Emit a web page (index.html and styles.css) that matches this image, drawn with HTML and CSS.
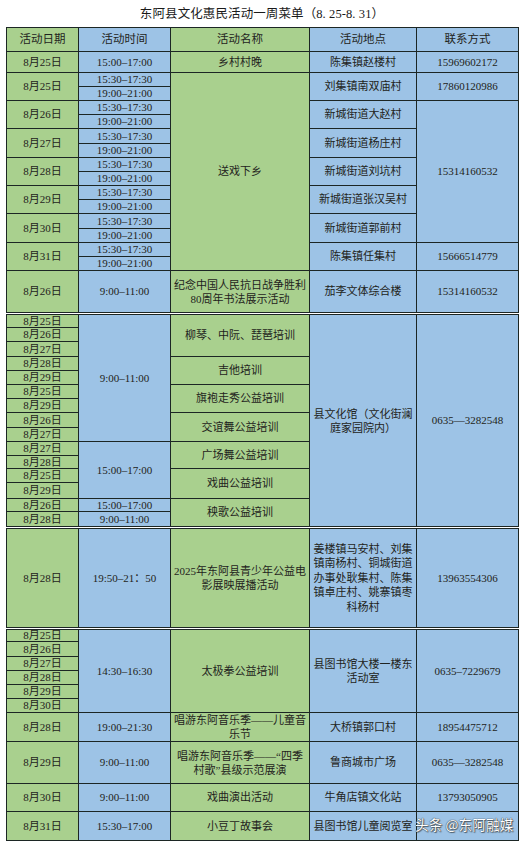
FILE: index.html
```html
<!DOCTYPE html>
<html lang="zh-CN">
<head>
<meta charset="utf-8">
<title>东阿县文化惠民活动一周菜单</title>
<link rel="stylesheet" href="styles.css">
</head>
<body>
<div class="page">
  <div class="title">东阿县文化惠民活动一周菜单（8. 25-8. 31）</div>
  <table class="menu">
    <colgroup>
      <col class="c-date">
      <col class="c-time">
      <col class="c-name">
      <col class="c-place">
      <col class="c-contact">
    </colgroup>
    <tr class="h24 head">
      <td>活动日期</td><td>活动时间</td><td>活动名称</td><td>活动地点</td><td>联系方式</td>
    </tr>
    <tr class="h21">
      <td>8月25日</td><td>15:00–17:00</td><td>乡村村晚</td><td>陈集镇赵楼村</td><td>15969602172</td>
    </tr>
    <tr class="h14">
      <td rowspan="2">8月25日</td><td>15:30–17:30</td><td rowspan="14">送戏下乡</td><td rowspan="2">刘集镇南双庙村</td><td rowspan="2">17860120986</td>
    </tr>
    <tr class="h14"><td>19:00–21:00</td></tr>
    <tr class="h14">
      <td rowspan="2">8月26日</td><td>15:30–17:30</td><td rowspan="2">新城街道大赵村</td><td rowspan="10">15314160532</td>
    </tr>
    <tr class="h14"><td>19:00–21:00</td></tr>
    <tr class="h15">
      <td rowspan="2">8月27日</td><td>15:30–17:30</td><td rowspan="2">新城街道杨庄村</td>
    </tr>
    <tr class="h14"><td>19:00–21:00</td></tr>
    <tr class="h14">
      <td rowspan="2">8月28日</td><td>15:30–17:30</td><td rowspan="2">新城街道刘坑村</td>
    </tr>
    <tr class="h14"><td>19:00–21:00</td></tr>
    <tr class="h14">
      <td rowspan="2">8月29日</td><td>15:30–17:30</td><td rowspan="2">新城街道张汉吴村</td>
    </tr>
    <tr class="h14"><td>19:00–21:00</td></tr>
    <tr class="h15">
      <td rowspan="2">8月30日</td><td>15:30–17:30</td><td rowspan="2">新城街道郭前村</td>
    </tr>
    <tr class="h14"><td>19:00–21:00</td></tr>
    <tr class="h14">
      <td rowspan="2">8月31日</td><td>15:30–17:30</td><td rowspan="2">陈集镇任集村</td><td rowspan="2">15666514779</td>
    </tr>
    <tr class="h14"><td>19:00–21:00</td></tr>
    <tr class="h43">
      <td>8月26日</td><td>9:00–11:00</td><td class="wrap">纪念中国人民抗日战争胜利80周年书法展示活动</td><td>茄李文体综合楼</td><td>15314160532</td>
    </tr>

    <tr class="h14 group">
      <td>8月25日</td><td rowspan="9">9:00–11:00</td><td rowspan="3">柳琴、中阮、琵琶培训</td><td rowspan="15" class="wrap">县文化馆（文化街澜庭家园院内）</td><td rowspan="15">0635—3282548</td>
    </tr>
    <tr class="h14"><td>8月26日</td></tr>
    <tr class="h15"><td>8月27日</td></tr>
    <tr class="h14"><td>8月28日</td><td rowspan="2">吉他培训</td></tr>
    <tr class="h14"><td>8月29日</td></tr>
    <tr class="h14"><td>8月25日</td><td rowspan="2">旗袍走秀公益培训</td></tr>
    <tr class="h14"><td>8月29日</td></tr>
    <tr class="h15"><td>8月26日</td><td rowspan="2">交谊舞公益培训</td></tr>
    <tr class="h14"><td>8月27日</td></tr>
    <tr class="h14"><td>8月27日</td><td rowspan="4">15:00–17:00</td><td rowspan="2">广场舞公益培训</td></tr>
    <tr class="h13"><td>8月28日</td></tr>
    <tr class="h14"><td>8月25日</td><td rowspan="2">戏曲公益培训</td></tr>
    <tr class="h16"><td>8月29日</td></tr>
    <tr class="h13"><td>8月26日</td><td>15:00–17:00</td><td rowspan="2">秧歌公益培训</td></tr>
    <tr class="h16"><td>8月28日</td><td>9:00–11:00</td></tr>

    <tr class="h101 group">
      <td>8月28日</td><td>19:50–21：50</td><td class="wrap">2025年东阿县青少年公益电影展映展播活动</td><td class="wrap lines">姜楼镇马安村、刘集镇南杨村、铜城街道办事处耿集村、陈集镇卓庄村、姚寨镇枣科杨村</td><td>13963554306</td>
    </tr>

    <tr class="h13 group">
      <td>8月25日</td><td rowspan="6">14:30–16:30</td><td rowspan="6">太极拳公益培训</td><td rowspan="6" class="wrap">县图书馆大楼一楼东活动室</td><td rowspan="6">0635–7229679</td>
    </tr>
    <tr class="h15"><td>8月26日</td></tr>
    <tr class="h14"><td>8月27日</td></tr>
    <tr class="h14"><td>8月28日</td></tr>
    <tr class="h14"><td>8月29日</td></tr>
    <tr class="h14"><td>8月30日</td></tr>

    <tr class="h28">
      <td>8月28日</td><td>19:00–21:30</td><td class="wrap">唱游东阿音乐季——儿童音乐节</td><td>大桥镇郭口村</td><td>18954475712</td>
    </tr>
    <tr class="h42">
      <td>8月29日</td><td>9:00–11:00</td><td class="wrap">唱游东阿音乐季——“四季村歌”县级示范展演</td><td>鲁商城市广场</td><td>0635—3282548</td>
    </tr>
    <tr class="h28">
      <td>8月30日</td><td>9:00–11:00</td><td>戏曲演出活动</td><td>牛角店镇文化站</td><td>13793050905</td>
    </tr>
    <tr class="h29">
      <td>8月31日</td><td>15:30–17:00</td><td>小豆丁故事会</td><td>县图书馆儿童阅览室</td><td></td>
    </tr>
  </table>
  <div class="watermark">头条 @东阿融媒</div>
</div>
</body>
</html>
```

FILE: styles.css
```css
html, body {
  margin: 0;
  padding: 0;
  background: #ffffff;
}

body {
  font-family: "Liberation Serif", "Noto Sans CJK SC", serif;
  color: #1f2320;
}

.page {
  position: relative;
  padding: 0 4px 4px 6px;
}

.title {
  height: 27px;
  line-height: 29px;
  text-align: center;
  font-size: 12.5px;
  color: #1a1a1a;
  letter-spacing: 0.1px;
}

.menu {
  width: 512px;
  table-layout: fixed;
  border-collapse: collapse;
  font-size: 11px;
  line-height: 11px;
}

.c-date { width: 72px; background: #a9d08e; }
.c-time { width: 92px; background: #9dc3e6; }
.c-name { width: 139px; background: #a9d08e; }
.c-place { width: 107px; background: #9dc3e6; }
.c-contact { width: 102px; background: #9dc3e6; }

.menu td {
  border: 1px solid #1c2624;
  padding: 0 1px;
  text-align: center;
  vertical-align: middle;
  white-space: nowrap;
  overflow: hidden;
}

.menu td.wrap {
  white-space: normal;
  line-height: 14px;
}

.menu td.lines {
  line-height: 14.5px;
}

.menu .group td {
  border-top: 3px double #1c2624;
}

.head td {
  font-size: 11.5px;
}

.h13 { height: 13px; }
.h14 { height: 14px; }
.h15 { height: 15px; }
.h16 { height: 16px; }
.h21 { height: 21px; }
.h24 { height: 24px; }
.h28 { height: 28px; }
.h29 { height: 29px; }
.h42 { height: 42px; }
.h43 { height: 43px; }
.h101 { height: 101px; }

.watermark {
  position: absolute;
  left: 415px;
  top: 815px;
  font-family: "Noto Sans CJK SC", sans-serif;
  font-size: 13.5px;
  line-height: 18px;
  color: #ffffff;
  letter-spacing: 0.2px;
  text-shadow:
    0 0 1px #3a3a3a,
    0 0 1px #3a3a3a,
    1px 1px 1px rgba(0, 0, 0, 0.5);
}
```
